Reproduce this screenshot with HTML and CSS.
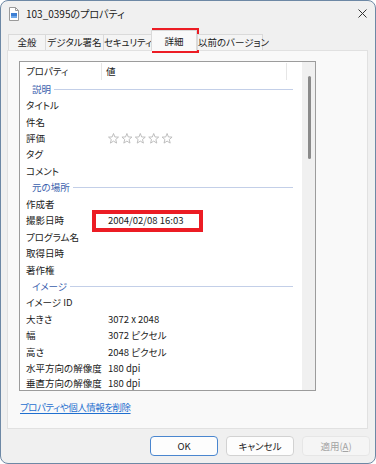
FILE: index.html
```html
<!DOCTYPE html>
<html lang="ja">
<head>
<meta charset="utf-8">
<title>103_0395のプロパティ</title>
<link rel="stylesheet" href="styles.css">
</head>
<body>
<svg width="0" height="0" class="defs">
  <defs>
    <symbol id="star" viewBox="0 0 11 11">
      <path d="M5.5 0.5 L6.85 3.94 L10.5 4.1 L7.69 6.51 L8.6 10.1 L5.5 8.1 L2.4 10.1 L3.31 6.51 L0.5 4.1 L4.15 3.94Z" fill="none" stroke="#b8b8b8" stroke-width="0.9" stroke-linejoin="round"/>
    </symbol>
  </defs>
</svg>
<div class="window">
  <div class="titlebar">
    <svg class="ficon" width="10" height="14" viewBox="0 0 10 14">
      <path d="M0.5 0.5h6l3 3v10h-9z" fill="#fff" stroke="#9a9a9a"/>
      <path d="M6.5 0.5v3h3" fill="none" stroke="#9a9a9a"/>
      <rect x="2" y="6" width="6" height="5" fill="#3d7fd3"/>
      <rect x="2" y="9" width="6" height="2" fill="#6fa8e8"/>
    </svg>
    <span class="title">103_0395のプロパティ</span>
    <svg class="close" width="9" height="9" viewBox="0 0 9 9">
      <path d="M0.5 0.5L8.5 8.5M8.5 0.5L0.5 8.5" stroke="#333" stroke-width="1"/>
    </svg>
  </div>
  <div class="tabs">
    <div class="tab tab-general">全般</div>
    <div class="tab tab-sign">デジタル署名</div>
    <div class="tab tab-sec">セキュリティ</div>
    <div class="tab tab-detail active">詳細</div>
    <div class="tab tab-prev">以前のバージョン</div>
  </div>
  <div class="panel">
    <div class="list">
      <div class="list-body">
        <div class="header">
          <div class="hcol hcol-key">プロパティ</div>
          <div class="hcol hcol-val">値</div>
        </div>
        <div class="group"><span>説明</span></div>
        <div class="row"><span class="k">タイトル</span><span class="v"></span></div>
        <div class="row"><span class="k">件名</span><span class="v"></span></div>
        <div class="row"><span class="k">評価</span><span class="v"><svg class="stars" width="65" height="11" viewBox="0 0 65 11"><use href="#star" x="0" width="11" height="11"/><use href="#star" x="13.4" width="11" height="11"/><use href="#star" x="26.8" width="11" height="11"/><use href="#star" x="40.2" width="11" height="11"/><use href="#star" x="53.6" width="11" height="11"/></svg></span></div>
        <div class="row"><span class="k">タグ</span><span class="v"></span></div>
        <div class="row"><span class="k">コメント</span><span class="v"></span></div>
        <div class="group"><span>元の場所</span></div>
        <div class="row"><span class="k">作成者</span><span class="v"></span></div>
        <div class="row"><span class="k">撮影日時</span><span class="v">2004/02/08 16:03</span></div>
        <div class="row"><span class="k">プログラム名</span><span class="v"></span></div>
        <div class="row"><span class="k">取得日時</span><span class="v"></span></div>
        <div class="row"><span class="k">著作権</span><span class="v"></span></div>
        <div class="group"><span>イメージ</span></div>
        <div class="row"><span class="k">イメージ ID</span><span class="v"></span></div>
        <div class="row"><span class="k">大きさ</span><span class="v">3072 x 2048</span></div>
        <div class="row"><span class="k">幅</span><span class="v">3072 ピクセル</span></div>
        <div class="row"><span class="k">高さ</span><span class="v">2048 ピクセル</span></div>
        <div class="row"><span class="k">水平方向の解像度</span><span class="v">180 dpi</span></div>
        <div class="row row-last"><span class="k">垂直方向の解像度</span><span class="v">180 dpi</span></div>
      </div>
      <div class="scrollbar"><div class="thumb"></div></div>
    </div>
    <a class="link" href="#">プロパティや個人情報を削除</a>
  </div>
  <div class="buttons">
    <button class="btn btn-default">OK</button>
    <button class="btn">キャンセル</button>
    <button class="btn btn-disabled">適用(<u>A</u>)</button>
  </div>
</div>
<div class="mark mark-tab"></div>
<div class="mark mark-date"></div>
</body>
</html>
```

FILE: styles.css
```css
* { box-sizing: border-box; }
html, body { margin: 0; padding: 0; }
body {
  width: 376px;
  height: 464px;
  background: #ffffff;
  font-family: "Noto Sans CJK JP", "Noto Sans", sans-serif;
  font-size: 9.5px;
  color: #1b1b1b;
  font-feature-settings: "palt";
  overflow: hidden;
  position: relative;
}
.defs { position: absolute; }

.window {
  width: 376px;
  height: 464px;
  border: 1px solid #6d88a5;
  border-radius: 8px;
  background: #f0f0f0;
  display: flex;
  flex-direction: column;
  overflow: hidden;
}

.titlebar {
  height: 24px;
  flex: none;
  display: flex;
  align-items: center;
  padding-left: 8px;
  padding-right: 8px;
}
.ficon { flex: none; margin-top: 1px; }
.title { margin-left: 7px; font-size: 10px; color: #1a1a1a; flex: 1; }
.close { flex: none; }

.tabs {
  height: 25px;
  flex: none;
  display: flex;
  align-items: flex-end;
  padding-left: 7px;
  position: relative;
  z-index: 1;
}
.tab {
  height: 16px;
  line-height: 15px;
  text-align: center;
  border: 1px solid #dadada;
  border-bottom: none;
  background: #f4f4f4;
  color: #1b1b1b;
  white-space: nowrap;
  margin-right: -1px;
}
.tab-general { width: 38px; }
.tab-sign { width: 59px; }
.tab-sec { width: 49px; letter-spacing: -0.2px; }
.tab-detail { width: 46px; }
.tab-prev { width: 66px; margin-left: 1px; }
.tab.active {
  height: 21px;
  line-height: 20px;
  margin-bottom: -1px;
  background: #f9f9f9;
  padding-bottom: 1px;
}

.panel {
  height: 379px;
  flex: none;
  margin: 0 7px 0 6px;
  border: 1px solid #e1e1e1;
  background: #f9f9f9;
  padding: 10px 0 0 11px;
  display: flex;
  flex-direction: column;
  align-items: flex-start;
}

.list {
  width: 297px;
  height: 330px;
  border: 1px solid #9c9c9c;
  background: #ffffff;
  display: flex;
  flex: none;
}
.list-body {
  flex: 1;
  height: 328px;
}
.scrollbar {
  width: 13px;
  flex: none;
  background: #f0f0f0;
  display: flex;
  justify-content: center;
  padding-left: 1px;
}
.thumb {
  width: 3px;
  height: 83px;
  margin-top: 14px;
  background: #8a8a8a;
  border-radius: 2px;
}

.header {
  height: 19px;
  display: flex;
  align-items: center;
}
.hcol { height: 17px; line-height: 17px; }
.hcol-key {
  width: 82px;
  padding-left: 6px;
  border-right: 1px solid #e6e6e6;
}
.hcol-val {
  width: 185px;
  padding-left: 4px;
  border-right: 1px solid #e6e6e6;
}

.group {
  height: 16.45px;
  display: flex;
  align-items: center;
  padding-left: 12px;
  margin-right: 9px;
  color: #3a60ad;
  line-height: 11px;
}
.group::after {
  content: "";
  flex: 1;
  height: 1px;
  background: #c3cfe8;
  margin-left: 3px;
}

.row {
  height: 16.45px;
  display: flex;
  align-items: center;
  line-height: 11px;
  white-space: nowrap;
}
.row-last {
  height: 13px;
  align-items: flex-end;
  padding-bottom: 1px;
}
.k { width: 82px; padding-left: 6px; flex: none; }
.v { padding-left: 6px; display: flex; align-items: center; }
.stars { display: block; }

.link {
  margin-top: 8px;
  margin-left: 1px;
  line-height: 16px;
  color: #1f6fcf;
  letter-spacing: -0.5px;
  text-decoration: underline;
  text-underline-offset: 2px;
}

.buttons {
  flex: none;
  display: flex;
  justify-content: flex-end;
  gap: 8px;
  padding: 7px 5px 0 0;
}
.btn {
  width: 68px;
  height: 20px;
  padding: 0;
  font-family: inherit;
  font-size: 9.5px;
  font-feature-settings: "palt";
  color: #1b1b1b;
  background: #fdfdfd;
  border: 1px solid #d2d2d2;
  border-radius: 4px;
}
.btn-default {
  border: 1.5px solid #4a86cf;
}
.btn-disabled {
  background: #f5f5f5;
  border-color: #e6e6e6;
  color: #a3a3a3;
}
.btn u { text-underline-offset: 1px; }

.mark {
  position: absolute;
  border: 4px solid #ec1c24;
}
.mark-tab {
  left: 152px;
  top: 28px;
  width: 47px;
  height: 25px;
}
.mark-date {
  left: 92px;
  top: 210px;
  width: 111px;
  height: 22px;
}
```
